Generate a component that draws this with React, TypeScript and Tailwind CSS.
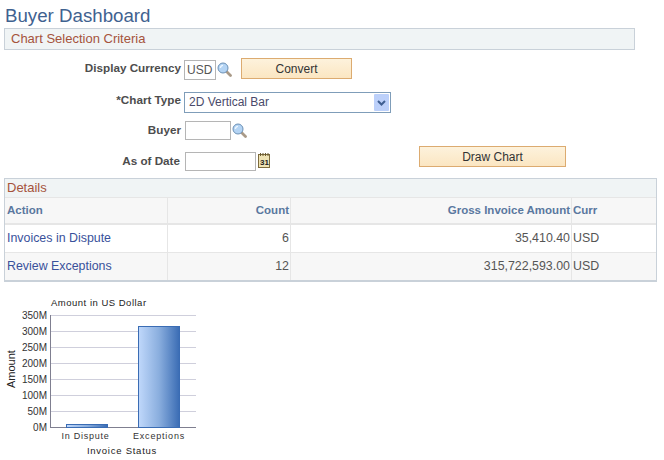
const font = "font-['Liberation_Sans',Arial,sans-serif]";

const Lens = () => (
  <svg width="15" height="15" viewBox="0 0 15 15" className="shrink-0">
    <path d="M9 9l4.5 4.5" stroke="#a99a88" strokeWidth="2.8" strokeLinecap="round" />
    <circle cx="6" cy="6" r="5" fill="#b4d4f4" stroke="#6b90b5" strokeWidth="1" />
    <path d="M3.4 6a2.6 2.6 0 0 1 2.6-2.6" stroke="#eef7ff" strokeWidth="1.4" fill="none" />
  </svg>
);

const Calendar = () => (
  <svg width="13" height="15" viewBox="0 0 13 15" className="shrink-0">
    <rect x="0.5" y="1.5" width="11" height="13" fill="#efe3b4" stroke="#7d6b3d" />
    <path d="M2.5 0v3M5 0v3M7.5 0v3M10 0v3" stroke="#6b5a30" strokeWidth="1" />
    <text x="2" y="11.5" fontSize="8" fontWeight="700" fontFamily="Liberation Sans" fill="#222">31</text>
  </svg>
);

const Btn = ({ label, className }: { label: string; className: string }) => (
  <div className={`flex items-center justify-center border border-[#dcab70] bg-gradient-to-b from-[#fdf2dc] to-[#fbe6c2] text-xs text-[#333] ${className}`}>
    {label}
  </div>
);

const Label = ({ text, className }: { text: string; className: string }) => (
  <div className={`w-[181px] shrink-0 text-right text-[11.7px] font-bold leading-[14px] text-[#4d4d4d] ${className}`}>{text}</div>
);

const ticks = ["350M", "300M", "250M", "200M", "150M", "100M", "50M", "0M"];

const Chart = () => (
  <svg width="210" height="170" viewBox="0 0 210 170" className="block" fontFamily="Liberation Sans">
    <defs>
      <linearGradient id="bar" x1="0" x2="1" y1="0" y2="0">
        <stop offset="0" stopColor="#c0d8fb" />
        <stop offset="0.5" stopColor="#8aaede" />
        <stop offset="1" stopColor="#3a6cb4" />
      </linearGradient>
    </defs>
    <text x="51" y="16" fontSize="9.5" letterSpacing="0.5" fill="#222">Amount in US Dollar</text>
    {ticks.map((t, i) => {
      const y = 25 + i * 16;
      return (
        <g key={t}>
          <line x1="50" x2="196" y1={y + 0.5} y2={y + 0.5} stroke={i === 7 ? "#7f7f90" : "#cfcfdc"} />
          <text x="47" y={y + 4} fontSize="10" textAnchor="end" fill="#333">{t}</text>
        </g>
      );
    })}
    <line x1="50.5" x2="50.5" y1="25" y2="137" stroke="#7f7f90" />
    <rect x="66.5" y="134.5" width="41" height="3" fill="url(#bar)" stroke="#3a6cb4" />
    <rect x="138.5" y="36.5" width="41" height="101" fill="url(#bar)" stroke="#3a6cb4" />
    <text x="85.5" y="149" fontSize="9" letterSpacing="0.75" textAnchor="middle" fill="#333">In Dispute</text>
    <text x="159" y="149" fontSize="9" letterSpacing="0.8" textAnchor="middle" fill="#333">Exceptions</text>
    <text x="122" y="164" fontSize="9.5" letterSpacing="0.75" textAnchor="middle" fill="#222">Invoice Status</text>
    <text transform="translate(15 98) rotate(-90)" fontSize="11" fill="#222">Amount</text>
  </svg>
);

const rows = [
  { action: "Invoices in Dispute", count: "6", amount: "35,410.40", curr: "USD", odd: false },
  { action: "Review Exceptions", count: "12", amount: "315,722,593.00", curr: "USD", odd: true },
];

export default function App() {
  return (
    <div className={`${font} h-[460px] w-[664px] overflow-hidden bg-white`}>
      <h1 className="pl-[5px] pt-[5px] text-[18.7px] leading-[22px] text-[#3f6290]">Buyer Dashboard</h1>

      <div className="ml-1 mt-[1px] flex h-[22px] w-[631px] items-center border border-[#c9d1d9] bg-[#f0f4f5] pl-[6px] text-[13px] text-[#a5533c]">
        Chart Selection Criteria
      </div>

      <div className="mt-2 flex items-start">
        <Label text="Display Currency" className="mt-[3px]" />
        <div className="ml-[3px] mt-[2px] flex h-5 w-[32px] items-center border border-[#b5b5b5] pl-[2px] text-xs text-[#555]">USD</div>
        <div className="ml-[1px] mt-1"><Lens /></div>
        <Btn label="Convert" className="ml-[9px] h-[21px] w-[111px]" />
      </div>

      <div className="mt-3 flex items-start">
        <Label text="*Chart Type" className="mt-[1px]" />
        <div className="ml-[3px] flex h-[21px] w-[207px] items-center justify-between border border-[#7f9db9] pl-[4px] pr-[1px] text-xs text-[#4a4a6a]">
          <span className="-mt-[1px]">2D Vertical Bar</span>
          <div className="flex h-[17px] w-[15px] items-center justify-center rounded-[1px] bg-[#bcd0fa]">
            <svg width="9" height="6" viewBox="0 0 9 6">
              <path d="M1 1l3.5 3.5L8 1" stroke="#3f5f92" strokeWidth="2" fill="none" />
            </svg>
          </div>
        </div>
      </div>

      <div className="mt-2 flex items-start">
        <Label text="Buyer" className="mt-[2px]" />
        <div className="ml-1 h-[19px] w-[46px] border border-[#b5b5b5]" />
        <div className="ml-[1px] mt-[2px]"><Lens /></div>
      </div>

      <div className="mt-[6px] flex items-start">
        <Label text="As of Date" className="mt-2 -translate-x-[1px]" />
        <div className="ml-1 mt-[6px] h-[19px] w-[71px] border border-[#b5b5b5]" />
        <div className="ml-[2px] mt-[7px]"><Calendar /></div>
        <Btn label="Draw Chart" className="ml-[148px] h-[21px] w-[147px]" />
      </div>

      <div className="ml-1 mt-[7px] w-[653px] border border-b-2 border-[#c9d1d9]">
        <div className="flex h-[18px] items-center bg-[#f0f4f5] pl-[2px] text-[13px] text-[#a5533c]">Details</div>
        <div className="flex h-[28px] border-b-2 border-t border-[#e6e6e6] bg-[#f7f7f7] text-[11.5px] font-bold text-[#5a789f]">
          <div className="flex w-[163px] items-center border-r border-[#e6e6e6] pl-[2px]">Action</div>
          <div className="flex w-[123px] items-center justify-end border-r border-[#e6e6e6] pr-[1px]">Count</div>
          <div className="flex w-[281px] items-center justify-end border-r border-[#e6e6e6] pr-[1px]">Gross Invoice Amount</div>
          <div className="flex flex-1 items-center pl-[1px]">Curr</div>
        </div>
        {rows.map((r) => (
          <div key={r.action} className={`flex border-[#e6e6e6] text-[12.4px] text-[#555] ${r.odd ? "h-[28px] border-t bg-[#f7f7f7]" : "h-[27px] bg-white"}`}>
            <div className="flex w-[163px] items-center border-r border-[#e6e6e6] pl-[2px] text-[#39519b]">{r.action}</div>
            <div className="flex w-[123px] items-center justify-end border-r border-[#e6e6e6] pr-[1px]">{r.count}</div>
            <div className="flex w-[281px] items-center justify-end border-r border-[#e6e6e6] pr-[1px]">{r.amount}</div>
            <div className="flex flex-1 items-center pl-[1px]">{r.curr}</div>
          </div>
        ))}
      </div>

      <div className="mt-2"><Chart /></div>
    </div>
  );
}
